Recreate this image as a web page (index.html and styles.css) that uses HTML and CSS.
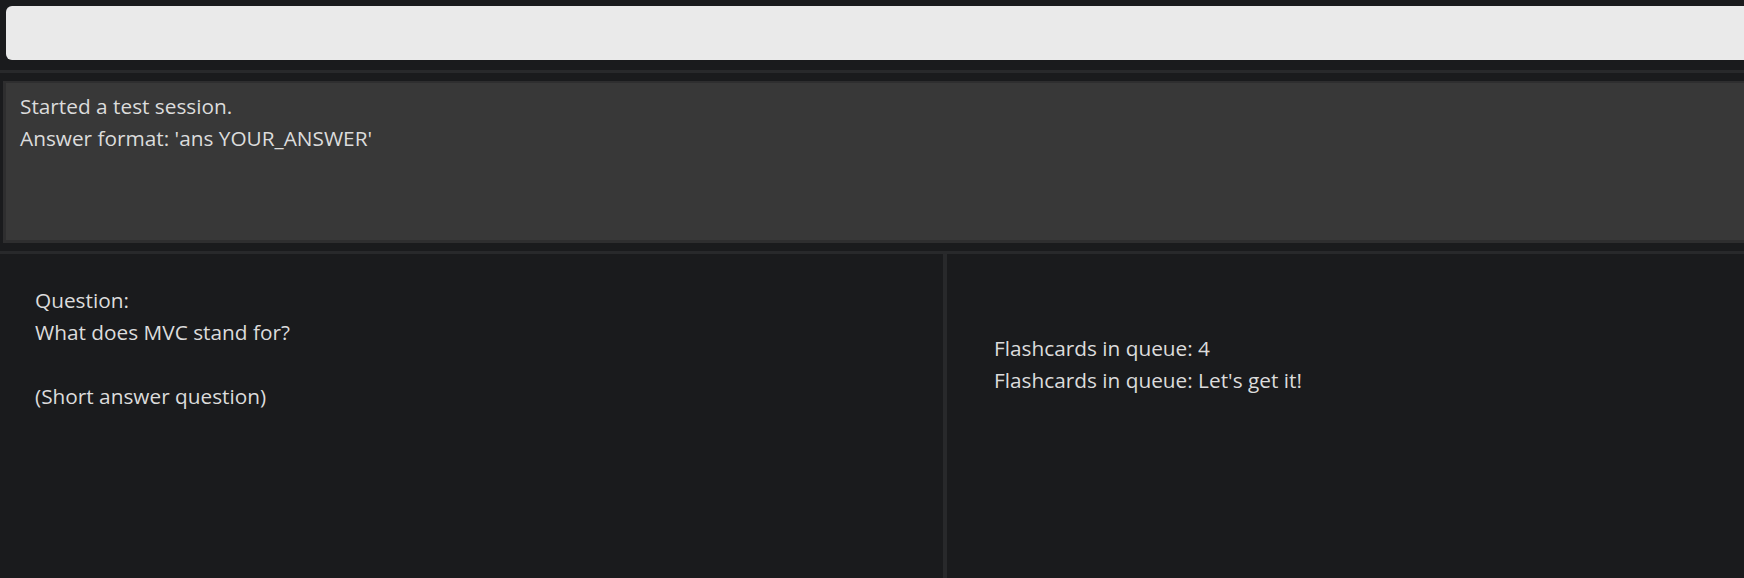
FILE: index.html
```html
<!DOCTYPE html>
<html>
<head>
<meta charset="utf-8">
<link rel="stylesheet" href="styles.css">
</head>
<body>
<div class="app">
  <div class="command-bar">
    <div class="command-input"></div>
  </div>
  <div class="rule"></div>
  <div class="result-pane">
    <div class="result-box">
      <div class="line">Started a test session.</div>
      <div class="line">Answer format: 'ans YOUR_ANSWER'</div>
    </div>
  </div>
  <div class="rule"></div>
  <div class="panels">
    <div class="panel question">
      <div class="line">Question:</div>
      <div class="line">What does MVC stand for?</div>
      <div class="line">&nbsp;</div>
      <div class="line">(Short answer question)</div>
    </div>
    <div class="vrule"></div>
    <div class="panel status">
      <div class="line">Flashcards in queue: 4</div>
      <div class="line">Flashcards in queue: Let's get it!</div>
    </div>
  </div>
</div>
</body>
</html>
```

FILE: styles.css
```css
html, body {
  margin: 0;
  padding: 0;
  background: #1a1b1d;
  overflow: hidden;
}
.app {
  width: 1780px;
  height: 578px;
  display: flex;
  flex-direction: column;
  font-family: "Open Sans", "Noto Sans", sans-serif;
  font-size: 20.8px;
  line-height: 32px;
  color: #dcdcdc;
}
.command-bar {
  padding: 6px 0 0 6px;
  height: 70px;
  box-sizing: border-box;
  flex: none;
}
.command-input {
  height: 54px;
  background: #eaeaea;
  border-radius: 6px;
}
.rule {
  height: 3px;
  background: #28292b;
  flex: none;
}
.result-pane {
  padding: 8px 0 8px 3px;
  flex: none;
}
.result-box {
  height: 150px;
  background: #383838;
  border: 2px solid #2e2e2f;
  border-left-width: 3px;
  border-bottom-width: 3px;
  padding: 7px 14px 0;
  box-sizing: content-box;
}
.panels {
  flex: 1;
  display: flex;
}
.panel {
  box-sizing: border-box;
}
.question {
  width: 943px;
  padding: 30px 0 0 35px;
}
.vrule {
  width: 4px;
  background: #28292b;
}
.status {
  flex: 1;
  padding: 78px 0 0 47px;
}
.line {
  white-space: pre;
}
```
